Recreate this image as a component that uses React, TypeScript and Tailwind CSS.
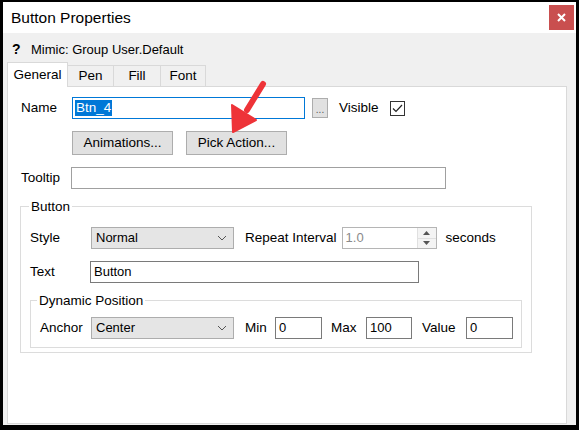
import React from 'react';

const font = { fontFamily: '"Liberation Sans", Arial, sans-serif' };

// simple windows-style text box
const TextBox: React.FC<{ w: string; value?: string; className?: string }> = ({ w, value = '', className = '' }) => (
  <div className={`${w} h-[22px] border border-[#7a7a7a] bg-white flex items-center pl-[3px] text-[13px] text-black ${className}`}>
    {value}
  </div>
);

const Combo: React.FC<{ value: string }> = ({ value }) => (
  <div className="w-[143px] h-[22px] border border-[#adadad] bg-[#e5e5e5] flex items-center justify-between pl-[4px] pr-[6px] text-[13px]">
    <span>{value}</span>
    <svg width="10" height="6" viewBox="0 0 10 6" fill="none">
      <path d="M1 1l4 4 4-4" stroke="#555" strokeWidth="1" />
    </svg>
  </div>
);

const PushButton: React.FC<{ label: string; className?: string }> = ({ label, className = '' }) => (
  <div className={`w-[101px] h-[24px] border border-[#adadad] bg-[#e1e1e1] flex items-center justify-center text-[13.5px] ${className}`}>
    {label}
  </div>
);

const App: React.FC = () => {
  return (
    <div className="w-[579px] h-[430px] bg-black pt-[2px] pl-[3px] pr-[3px] pb-[5px]" style={font}>
      <div className="relative w-full h-full bg-[#f0f0f0] flex flex-col text-black">
        {/* Title bar */}
        <div className="h-[31px] bg-white flex items-center justify-between pl-[8px] pr-[2px] shrink-0">
          <span className="text-[15.5px]">Button Properties</span>
          <div className="w-[25px] h-[25px] bg-[#c94f4f] flex items-center justify-center">
            <svg width="9" height="9" viewBox="0 0 9 9">
              <path d="M1 1l7 7M8 1l-7 7" stroke="white" strokeWidth="2" />
            </svg>
          </div>
        </div>

        {/* Header line */}
        <div className="h-[30px] flex items-center pt-[3px] pl-[9px] text-[13px] shrink-0">
          <span className="font-bold text-[14px] w-[19px]">?</span>
          <span>Mimic: Group User.Default</span>
        </div>

        {/* Tabs */}
        <div className="flex items-end h-[23px] pl-[4px] shrink-0 relative z-10">
          <div className="w-[61px] h-[25px] bg-white border border-[#d9d9d9] border-b-0 flex items-center justify-center text-[13.5px] mb-[-1px]">
            General
          </div>
          <div className="w-[46px] h-[21px] bg-[#f0f0f0] border border-[#d9d9d9] border-b-0 border-l-0 flex items-center justify-center text-[13.5px]">
            Pen
          </div>
          <div className="w-[47px] h-[21px] bg-[#f0f0f0] border border-[#d9d9d9] border-b-0 border-l-0 flex items-center justify-center text-[13.5px]">
            Fill
          </div>
          <div className="w-[45px] h-[21px] bg-[#f0f0f0] border border-[#d9d9d9] border-b-0 border-l-0 flex items-center justify-center text-[13.5px]">
            Font
          </div>
        </div>

        {/* Tab page */}
        <div className="flex-1 ml-[4px] mr-[9px] mb-[1px] bg-white border border-[#d9d9d9] text-[13.5px]">
          {/* Name */}
          <div className="flex items-center h-[22px] mt-[10px] pl-[13px]">
            <span className="w-[51px]">Name</span>
            <div className="w-[233px] h-[22px] border border-[#0078d7] bg-white flex items-center pl-[2px]">
              <span className="bg-[#0078d7] text-white leading-[16px] px-[1px]">Btn_4</span>
            </div>
            <div className="ml-[7px] w-[16px] h-[20px] border border-[#adadad] bg-[#e1e1e1] flex items-end justify-center text-[10px] leading-[14px] text-[#555]">
              ...
            </div>
            <span className="ml-[11px]">Visible</span>
            <div className="ml-[11px] w-[15px] h-[15px] border border-[#333] flex items-center justify-center">
              <svg width="11" height="9" viewBox="0 0 11 9" fill="none">
                <path d="M1 4.5l3 3 6-6.5" stroke="#222" strokeWidth="1.2" />
              </svg>
            </div>
          </div>

          {/* Animations / Pick Action */}
          <div className="flex h-[24px] mt-[12px] pl-[64px]">
            <PushButton label="Animations..." />
            <PushButton label="Pick Action..." className="ml-[13px]" />
          </div>

          {/* Tooltip */}
          <div className="flex items-center h-[22px] mt-[12px] pl-[13px]">
            <span className="w-[50px]">Tooltip</span>
            <TextBox w="w-[375px]" className="border-[#a0a0a0]" />
          </div>

          {/* Button group */}
          <fieldset className="ml-[12px] w-[512px] mt-[10px] border border-[#dcdcdc] pb-[4px]">
            <legend className="ml-[8px] px-[2px] leading-[15px]">Button</legend>

            <div className="flex items-center h-[22px] mt-[13px] pl-[9px]">
              <span className="w-[61px]">Style</span>
              <Combo value="Normal" />
              <span className="ml-[11px]">Repeat Interval</span>
              <div className="ml-[5px] w-[95px] h-[22px] border border-[#b5b5b5] bg-white flex items-center justify-between pl-[3px]">
                <span className="text-[#8a8a8a] text-[13px]">1.0</span>
                <div className="w-[19px] h-full flex flex-col border-l border-[#e0e0e0] bg-[#f4f4f4]">
                  <div className="flex-1 flex items-center justify-center border-b border-[#e0e0e0]">
                    <svg width="7" height="4" viewBox="0 0 7 4"><path d="M0 4L3.5 0 7 4z" fill="#555" /></svg>
                  </div>
                  <div className="flex-1 flex items-center justify-center">
                    <svg width="7" height="4" viewBox="0 0 7 4"><path d="M0 0L3.5 4 7 0z" fill="#555" /></svg>
                  </div>
                </div>
              </div>
              <span className="ml-[9px]">seconds</span>
            </div>

            <div className="flex items-center h-[22px] mt-[12px] pl-[9px]">
              <span className="w-[60px]">Text</span>
              <TextBox w="w-[329px]" value="Button" />
            </div>

            {/* Dynamic Position group */}
            <fieldset className="ml-[9px] w-[492px] mt-[10px] border border-[#dcdcdc] pb-[8px]">
              <legend className="ml-[6px] px-[2px] leading-[15px]">Dynamic Position</legend>
              <div className="flex items-center h-[22px] mt-[9px] pl-[9px]">
                <span className="w-[51px]">Anchor</span>
                <Combo value="Center" />
                <span className="ml-[11px] w-[30px]">Min</span>
                <TextBox w="w-[47px]" value="0" />
                <span className="ml-[9px] w-[35px]">Max</span>
                <TextBox w="w-[46px]" value="100" />
                <span className="ml-[10px] w-[44px]">Value</span>
                <TextBox w="w-[47px]" value="0" />
              </div>
            </fieldset>
          </fieldset>
        </div>

        {/* Red callout arrow over the page */}
        <svg className="absolute left-0 top-0 pointer-events-none" width="573" height="423" viewBox="0 0 573 423">
          <g transform="translate(-3 -2)">
            <line x1="263" y1="84" x2="247" y2="110" stroke="#ee3338" strokeWidth="6" strokeLinecap="round" />
            <path d="M233 132L232 105L256 120Z" fill="#ee3338" stroke="#ee3338" strokeWidth="2" strokeLinejoin="round" />
          </g>
        </svg>
      </div>
    </div>
  );
};

export default App;
